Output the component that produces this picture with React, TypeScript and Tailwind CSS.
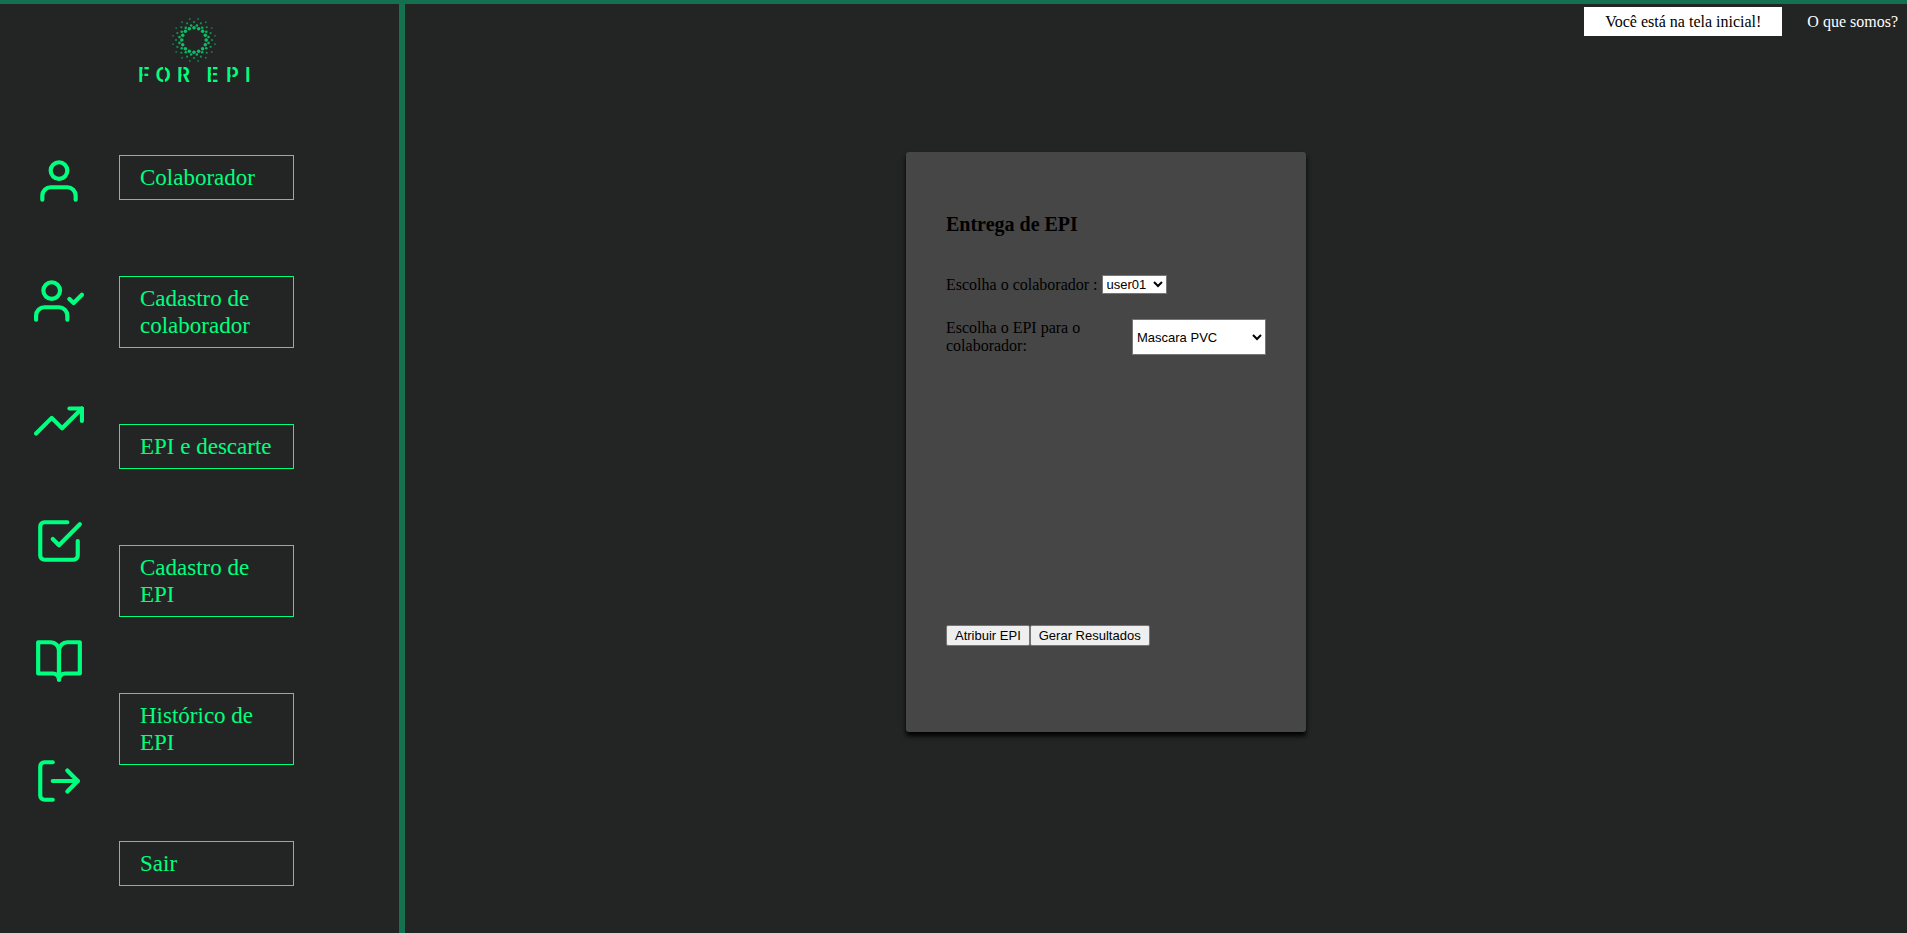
import type { ReactNode } from "react";
import {
  FiBookOpen,
  FiCheckSquare,
  FiLogOut,
  FiTrendingUp,
  FiUser,
  FiUserCheck,
} from "react-icons/fi";

const links = [
  "Colaborador",
  "Cadastro de colaborador",
  "EPI e descarte",
  "Cadastro de EPI",
  "Histórico de EPI",
  "Sair",
];

const icons = [FiUser, FiUserCheck, FiTrendingUp, FiCheckSquare, FiBookOpen, FiLogOut];

const rings = [
  { radius: 12.2, dot: 1.75, shift: 0, opacity: 0.72 },
  { radius: 14.8, dot: 1.3, shift: 0.5, opacity: 0.65 },
  { radius: 18, dot: 1.1, shift: 0, opacity: 0.5 },
  { radius: 21.4, dot: 0.95, shift: 0.5, opacity: 0.4 },
];

function Logo() {
  return (
    <svg viewBox="0 0 120 76" className="h-[76px] w-[120px]" role="img" aria-label="FOR EPI">
      {rings.map((ring) =>
        Array.from({ length: 16 }, (_, i) => {
          const angle = ((i + ring.shift) * Math.PI) / 8;
          return (
            <circle
              key={`${ring.radius}-${i}`}
              cx={60 + ring.radius * Math.cos(angle)}
              cy={27 + ring.radius * Math.sin(angle)}
              r={ring.dot}
              fill="#00ff7f"
              opacity={ring.opacity}
            />
          );
        }),
      )}
      <text
        y="69"
        x="4 21.5 43 72.5 92 111"
        className="fill-[#00ff7f] font-['Inter',sans-serif] text-[20px] font-semibold"
      >
        FOREPI
      </text>
      <path
        d="M9.5 53V70M30 53V70M48.5 53V70M78 53V70M97.5 53V70"
        stroke="#232525"
        strokeWidth="1.8"
      />
    </svg>
  );
}

function FormButton({ children }: { children: ReactNode }) {
  return (
    <button
      type="button"
      className="rounded-[2px] border border-[#767676] bg-[#efefef] px-2 text-[13px] leading-[19px] font-['Liberation_Sans',Arial,sans-serif]"
    >
      {children}
    </button>
  );
}

export default function App() {
  return (
    <div className="flex min-h-screen flex-col border-t-4 border-[#13714f] bg-[#232525] font-['Liberation_Serif',serif] text-base leading-[18px] text-black">
      <div className="flex flex-1">
        <aside className="flex w-[405px] shrink-0 flex-col border-r-6 border-[#13714f]">
          <div className="flex justify-center pt-[9px] pr-3">
            <Logo />
          </div>
          <div className="flex gap-[35px] pt-[66px] pl-[34px]">
            <div className="flex flex-col gap-[70px] pt-px text-[#00ff7f]">
              {icons.map((Icon, i) => (
                <Icon key={i} size={50} aria-hidden="true" />
              ))}
            </div>
            <nav className="flex w-[175px] flex-col gap-[76px]">
              {links.map((label) => (
                <a
                  key={label}
                  href="#"
                  className="border border-[#00ff7f] px-5 py-2 text-[23px] leading-[27px] text-[#00ff7f]"
                >
                  {label}
                </a>
              ))}
            </nav>
          </div>
        </aside>

        <div className="flex flex-1 flex-col">
          <header className="flex justify-end gap-[25px] pt-[3px] pr-[9px]">
            <a href="#" className="bg-white px-[21px] py-[5px] leading-[19px]">
              Você está na tela inicial!
            </a>
            <a href="#" className="py-[5px] leading-[19px] text-white">
              O que somos?
            </a>
          </header>

          <main className="flex justify-center pt-[116px] pr-[100px]">
            <form className="flex min-h-[580px] w-[400px] flex-col rounded-[3px] bg-[#464646] px-10 pt-[60px] shadow-[0_4px_5px_0_#000]">
              <h1 className="text-[20px] leading-6 font-bold">Entrega de EPI</h1>
              <div className="mt-[39px] flex items-center gap-1">
                <label htmlFor="colaborador">Escolha o colaborador :</label>
                <select
                  id="colaborador"
                  className="h-[19px] w-[65px] border border-[#767676] bg-white text-[13px] font-['Liberation_Sans',Arial,sans-serif]"
                >
                  <option>user01</option>
                </select>
              </div>
              <div className="mt-[25px] flex items-stretch justify-between">
                <label htmlFor="epi" className="w-[150px]">
                  Escolha o EPI para o colaborador:
                </label>
                <select
                  id="epi"
                  className="w-[134px] border border-[#767676] bg-white text-[13px] font-['Liberation_Sans',Arial,sans-serif]"
                >
                  <option>Mascara PVC</option>
                </select>
              </div>
              <div className="mt-auto flex pb-[86px]">
                <FormButton>Atribuir EPI</FormButton>
                <FormButton>Gerar Resultados</FormButton>
              </div>
            </form>
          </main>
        </div>
      </div>
    </div>
  );
}
